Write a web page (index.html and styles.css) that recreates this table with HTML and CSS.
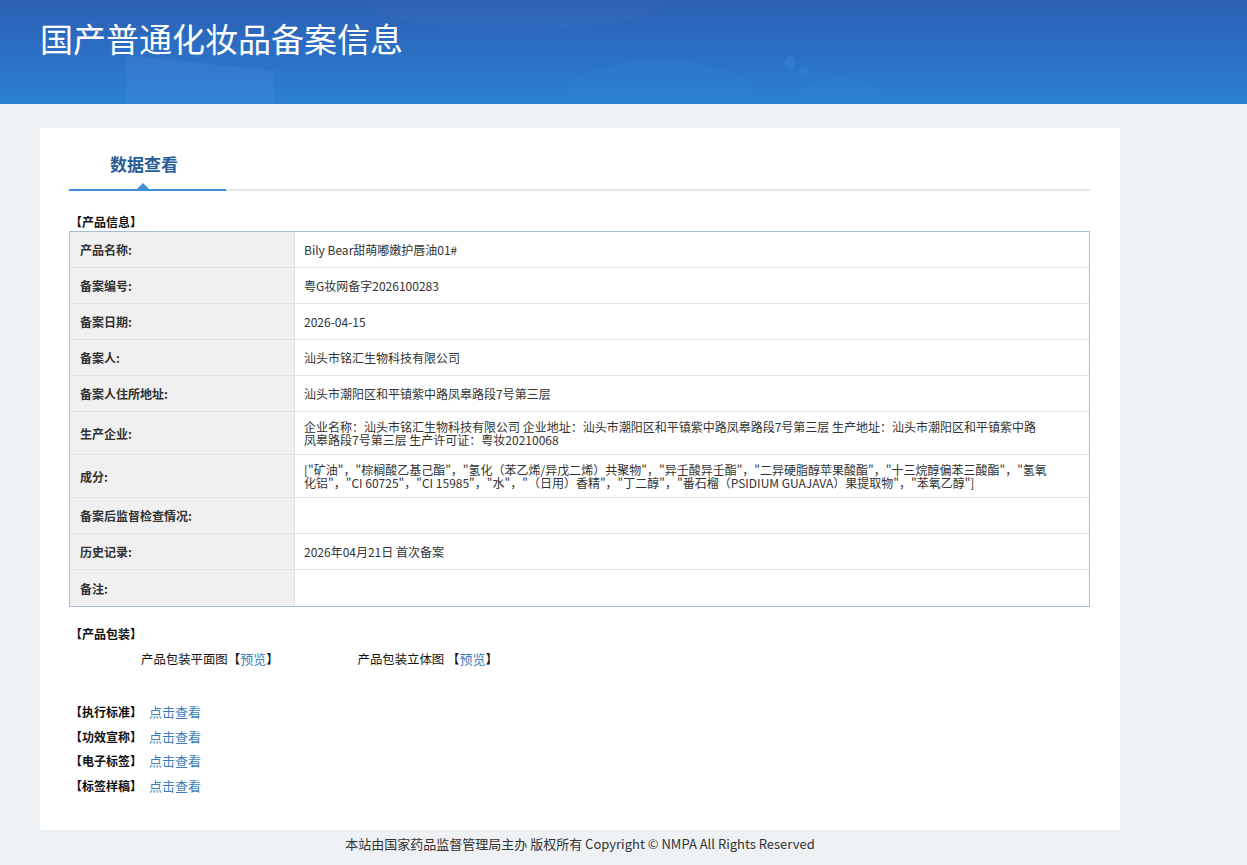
FILE: index.html
```html
<!DOCTYPE html>
<html lang="zh-CN">
<head>
<meta charset="utf-8">
<title>国产普通化妆品备案信息</title>
<link rel="stylesheet" href="styles.css">
</head>
<body>
<header class="banner">
  <div class="deco deco-slab"></div>
  <div class="deco deco-cloud"></div>
  <div class="deco deco-hill1"></div>
  <div class="deco deco-hill2"></div>
  <div class="deco deco-dot1"></div>
  <div class="deco deco-dot2"></div>
  <h1 class="banner-title">国产普通化妆品备案信息</h1>
</header>
<main class="page">
  <section class="card">
    <nav class="tabs"><div class="tab active">数据查看</div></nav>
    <h2 class="sec-title">【产品信息】</h2>
    <table class="info">
      <tbody>
        <tr><th>产品名称:</th><td>Bily Bear甜萌嘟嫩护唇油01#</td></tr>
        <tr><th>备案编号:</th><td>粤G妆网备字2026100283</td></tr>
        <tr><th>备案日期:</th><td>2026-04-15</td></tr>
        <tr><th>备案人:</th><td>汕头市铭汇生物科技有限公司</td></tr>
        <tr><th>备案人住所地址:</th><td>汕头市潮阳区和平镇紫中路凤皋路段7号第三层</td></tr>
        <tr><th>生产企业:</th><td>企业名称：汕头市铭汇生物科技有限公司 企业地址：汕头市潮阳区和平镇紫中路凤皋路段7号第三层 生产地址：汕头市潮阳区和平镇紫中路凤皋路段7号第三层 生产许可证：粤妆20210068</td></tr>
        <tr><th>成分:</th><td>["矿油"，"棕榈酸乙基己酯"，"氢化（苯乙烯/异戊二烯）共聚物"，"异壬酸异壬酯"，"二异硬脂醇苹果酸酯"，"十三烷醇偏苯三酸酯"，"氢氧化铝"，"CI 60725"，"CI 15985"，"水"，"（日用）香精"，"丁二醇"，"番石榴（PSIDIUM GUAJAVA）果提取物"，"苯氧乙醇"]</td></tr>
        <tr><th>备案后监督检查情况:</th><td></td></tr>
        <tr><th>历史记录:</th><td>2026年04月21日 首次备案</td></tr>
        <tr><th>备注:</th><td></td></tr>
      </tbody>
    </table>
    <h2 class="sec-title pack-title">【产品包装】</h2>
    <div class="pack-row">
      <span class="pack-item">产品包装平面图【<a class="link" href="#">预览</a>】</span>
      <span class="pack-item">产品包装立体图 【<a class="link" href="#">预览</a>】</span>
    </div>
    <ul class="doc-links">
      <li><b class="doc-label">【执行标准】</b><a class="link" href="#">点击查看</a></li>
      <li><b class="doc-label">【功效宣称】</b><a class="link" href="#">点击查看</a></li>
      <li><b class="doc-label">【电子标签】</b><a class="link" href="#">点击查看</a></li>
      <li><b class="doc-label">【标签样稿】</b><a class="link" href="#">点击查看</a></li>
    </ul>
  </section>
</main>
<footer class="site-footer">本站由国家药品监督管理局主办 版权所有 Copyright © NMPA All Rights Reserved</footer>
</body>
</html>
```
FILE: styles.css
```css
html, body {
  margin: 0;
  padding: 0;
}
body {
  background: #eef2f5;
  font-family: "Noto Sans CJK SC", "Noto Sans", sans-serif;
  color: #333;
  font-size: 12px;
}
.banner {
  position: relative;
  height: 104px;
  overflow: hidden;
  background: linear-gradient(180deg, #2c5fb2 0%, #2c6fc4 50%, #2a80d3 100%);
}
.deco {
  position: absolute;
  pointer-events: none;
}
.deco-slab {
  left: 125px;
  top: 55px;
  width: 150px;
  height: 60px;
  background: rgba(90, 150, 230, 0.18);
  transform: skewY(6deg);
  transform-origin: left top;
}
.deco-cloud {
  left: 365px;
  top: -30px;
  width: 300px;
  height: 60px;
  border-radius: 50%;
  background: rgba(255, 255, 255, 0.025);
}
.deco-hill1 {
  left: 560px;
  top: 60px;
  width: 200px;
  height: 80px;
  border-radius: 50%;
  background: rgba(60, 150, 220, 0.1);
}
.deco-hill2 {
  left: 790px;
  top: 78px;
  width: 100px;
  height: 60px;
  border-radius: 50%;
  background: rgba(60, 150, 220, 0.1);
}
.deco-dot1 {
  left: 784px;
  top: 56px;
  width: 12px;
  height: 12px;
  border-radius: 50%;
  background: rgba(60, 150, 230, 0.3);
}
.deco-dot2 {
  left: 799px;
  top: 67px;
  width: 9px;
  height: 9px;
  border-radius: 50%;
  background: rgba(60, 150, 230, 0.3);
}
.banner-title {
  position: relative;
  margin: 0;
  padding: 19px 0 0 40px;
  font-size: 33px;
  line-height: 38px;
  font-weight: normal;
  color: #fff;
}
.page {
  padding-top: 24px;
}
.card {
  width: 1080px;
  margin-left: 40px;
  background: #fff;
  padding: 25px 0 31px;
  box-sizing: border-box;
}
.tabs {
  margin: 0 30px 0 29px;
  border-bottom: 2px solid #e6e6e6;
  display: flex;
}
.tab {
  position: relative;
  width: 157px;
  box-sizing: border-box;
  padding: 0 0 14px 41px;
  margin-bottom: -2px;
  border-bottom: 2px solid #3f8fd6;
  font-size: 17px;
  line-height: 22px;
  font-weight: bold;
  color: #265d97;
}
.tab::after {
  content: "";
  position: absolute;
  left: 68px;
  bottom: 0;
  border: 6px solid transparent;
  border-bottom-color: #3f8fd6;
  border-top-width: 0;
}
.sec-title {
  margin: 23px 0 0 30px;
  font-size: 12px;
  line-height: 16px;
  font-weight: bold;
  color: #111;
}
.info {
  margin: 1px 0 0 29px;
  width: 1021px;
  border-collapse: separate;
  border-spacing: 0;
  border: 1px solid #a5bdd6;
  table-layout: fixed;
}
.info tr {
  height: 36px;
}
.info th,
.info td {
  border-bottom: 1px solid #e3e3e3;
  line-height: 13px;
  vertical-align: middle;
  text-align: left;
  font-size: 12px;
}
.info tr:last-child th,
.info tr:last-child td {
  border-bottom: 0;
}
.info th {
  width: 225px;
  box-sizing: border-box;
  background: #f0f0f0;
  border-right: 1px solid #e3e3e3;
  padding: 8px 10px;
  font-weight: bold;
  color: #333;
}
.info td {
  padding: 8px 42px 8px 9px;
  color: #333;
}
.pack-title {
  margin-top: 19px;
}
.pack-row {
  display: flex;
  gap: 79px;
  margin-top: 9px;
  padding-left: 101px;
  line-height: 16px;
  font-size: 12.4px;
  color: #111;
}
.link {
  color: #3b7dbd;
  text-decoration: none;
  font-size: 13px;
}
.doc-links {
  list-style: none;
  margin: 33px 0 0 30px;
  padding: 0;
  line-height: 24.7px;
}
.doc-label {
  color: #111;
  margin-right: 7px;
}
.site-footer {
  width: 1080px;
  margin-left: 40px;
  text-align: center;
  line-height: 28px;
  font-size: 13px;
  color: #333;
}
```
